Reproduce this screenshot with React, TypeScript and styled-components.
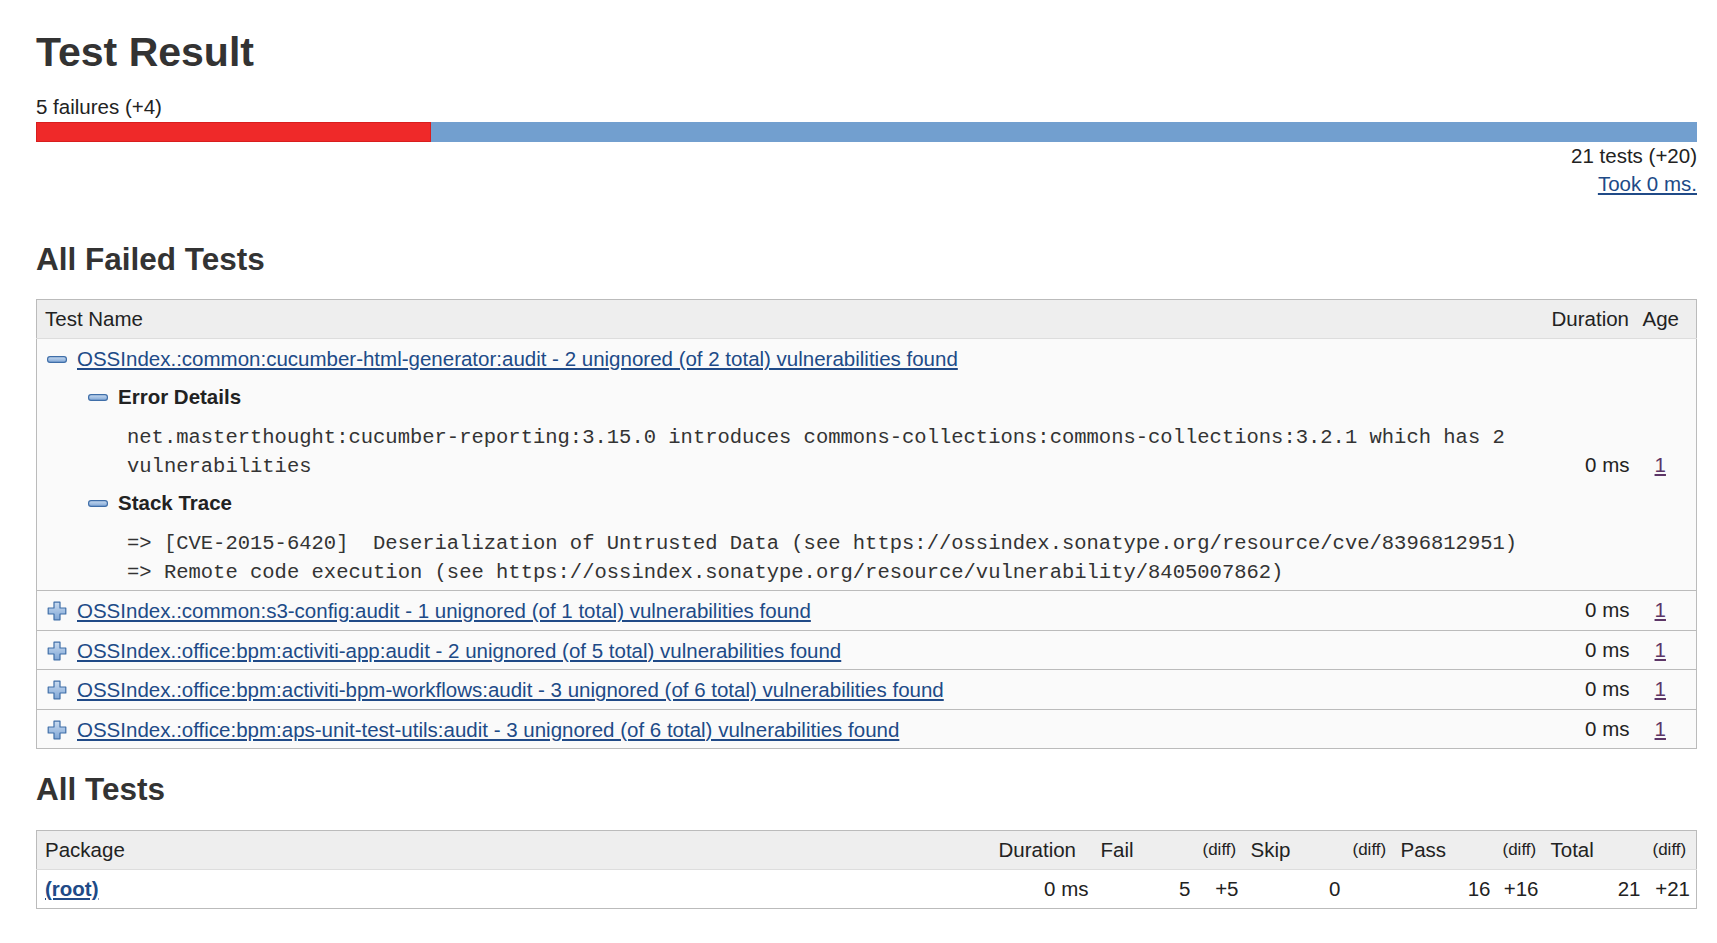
import React from "react";
import styled, { createGlobalStyle } from "styled-components";

const GlobalStyle = createGlobalStyle`
  html, body { margin: 0; padding: 0; background: #fff; }
  body {
    font-family: "Liberation Sans", Arial, Helvetica, sans-serif;
    font-size: 20.5px;
    color: #333;
  }
`;

const Page = styled.main`
  padding: 28px 20px 40px 36px;
`;

const Title = styled.h1`
  margin: 0;
  font-size: 41px;
  line-height: 48px;
  font-weight: bold;
  color: #333;
`;

const Summary = styled.div`
  margin-top: 19px;
  line-height: 24px;
  color: #222;
`;

const Bar = styled.div`
  display: flex;
  height: 20px;
  margin-top: 3px;
  background: #729fcf;
`;

const BarFail = styled.div`
  height: 100%;
  box-sizing: border-box;
  background: #ef2929;
  border: 1px solid #d81e1e;
`;

const RightLine = styled.div<{ $gap: number }>`
  text-align: right;
  line-height: 24px;
  margin-top: ${(p) => p.$gap}px;
  color: #222;
`;

const Link = styled.a<{ $bold?: boolean; $visited?: boolean }>`
  color: ${(p) => (p.$visited ? "#5c3566" : "#204a87")};
  text-decoration: underline;
  font-weight: ${(p) => (p.$bold ? "bold" : "normal")};
`;

const SectionTitle = styled.h2<{ $top: number; $bottom: number }>`
  margin: ${(p) => p.$top}px 0 ${(p) => p.$bottom}px;
  font-size: 31.5px;
  line-height: 36px;
  font-weight: bold;
  color: #333;
`;

const Pane = styled.table`
  width: 100%;
  table-layout: fixed;
  border-collapse: collapse;
  border: 1px solid #bbb;
`;

const Col = styled.col<{ $w?: number }>`
  width: ${(p) => (p.$w ? `${p.$w}px` : "auto")};
`;

const HeadCell = styled.th<{ $first?: boolean; $small?: boolean; $left?: number }>`
  background: #eee;
  font-weight: normal;
  text-align: left;
  white-space: nowrap;
  color: #222;
  height: 39px;
  box-sizing: border-box;
  padding: 0 6px 0 ${(p) => p.$left ?? (p.$first ? 8 : 6)}px;
  font-size: ${(p) => (p.$small ? "17px" : "20.5px")};
  line-height: 24px;
  border-bottom: 1px solid #ddd;
`;

const Row = styled.tr<{ $shade?: boolean }>`
  background: ${(p) => (p.$shade ? "#fafafa" : "#fff")};
  border-top: 1px solid #bbb;
`;

const NameCell = styled.td<{ $bottom: number }>`
  vertical-align: top;
  padding: 8px 6px ${(p) => p.$bottom}px 10px;
  line-height: 24px;
`;

const NumCell = styled.td`
  text-align: right;
  vertical-align: middle;
  white-space: nowrap;
  padding: 0 6px;
  line-height: 24px;
  color: #222;
`;

const AgeCell = styled.td`
  text-align: center;
  vertical-align: middle;
  padding: 0 18px 0 7px;
  line-height: 24px;
`;

const PackageCell = styled.td`
  padding: 7px 6px 7px 8px;
  line-height: 24px;
`;

const Toggle = styled.div`
  display: flex;
  align-items: center;
  gap: 10px;
`;

const DetailBlock = styled.div`
  margin-left: 41px;
`;

const DetailHeading = styled.h3<{ $top: number }>`
  margin: ${(p) => p.$top}px 0 0;
  display: flex;
  align-items: center;
  gap: 10px;
  font-size: 20.5px;
  line-height: 24px;
  font-weight: bold;
  color: #222;
`;

const Trace = styled.pre<{ $wrap?: boolean; $top: number }>`
  margin: ${(p) => p.$top}px 0 0 39px;
  font-family: "Liberation Mono", "Courier New", monospace;
  font-size: 20.5px;
  line-height: 28.5px;
  color: #333;
  white-space: ${(p) => (p.$wrap ? "pre-wrap" : "pre")};
`;

const IconBox = styled.span`
  display: inline-flex;
  flex: none;
`;

const MinusIcon = () => (
  <IconBox>
    <svg width="20" height="7" viewBox="0 0 20 7">
      <defs>
        <linearGradient id="minusFill" x1="0" y1="0" x2="0" y2="1">
          <stop offset="0" stopColor="#c9dbf0" />
          <stop offset="1" stopColor="#7fa6d6" />
        </linearGradient>
      </defs>
      <rect x="0.6" y="0.6" width="18.8" height="5.8" rx="2.4" fill="url(#minusFill)" stroke="#3f6ea8" strokeWidth="1.2" />
    </svg>
  </IconBox>
);

const PlusIcon = () => (
  <IconBox>
    <svg width="20" height="20" viewBox="0 0 20 20">
      <defs>
        <linearGradient id="plusFill" x1="0" y1="0" x2="0" y2="1">
          <stop offset="0" stopColor="#c9dbf0" />
          <stop offset="1" stopColor="#7fa6d6" />
        </linearGradient>
      </defs>
      <path
        d="M7 1.2 H13 V7 H18.8 V13 H13 V18.8 H7 V13 H1.2 V7 H7 Z"
        fill="url(#plusFill)"
        stroke="#3f6ea8"
        strokeWidth="1.2"
        strokeLinejoin="round"
      />
    </svg>
  </IconBox>
);

const collapsed = [
  "OSSIndex.:common:s3-config:audit - 1 unignored (of 1 total) vulnerabilities found",
  "OSSIndex.:office:bpm:activiti-app:audit - 2 unignored (of 5 total) vulnerabilities found",
  "OSSIndex.:office:bpm:activiti-bpm-workflows:audit - 3 unignored (of 6 total) vulnerabilities found",
  "OSSIndex.:office:bpm:aps-unit-test-utils:audit - 3 unignored (of 6 total) vulnerabilities found",
];

const errorText =
  "net.masterthought:cucumber-reporting:3.15.0 introduces commons-collections:commons-collections:3.2.1 which has 2 vulnerabilities";

const stackText =
  "=> [CVE-2015-6420]  Deserialization of Untrusted Data (see https://ossindex.sonatype.org/resource/cve/8396812951)\n=> Remote code execution (see https://ossindex.sonatype.org/resource/vulnerability/8405007862)";

const allCols = [102, 102, 48, 102, 48, 102, 48, 102, 50];
const allHeads: { label: string; small?: boolean }[] = [
  { label: "Duration" },
  { label: "Fail" },
  { label: "(diff)", small: true },
  { label: "Skip" },
  { label: "(diff)", small: true },
  { label: "Pass" },
  { label: "(diff)", small: true },
  { label: "Total" },
  { label: "(diff)", small: true },
];
const allValues = ["0 ms", "5", "+5", "0", "", "16", "+16", "21", "+21"];

export default function App() {
  const failShare = (5 / 21) * 100;
  return (
    <>
      <GlobalStyle />
      <Page>
        <Title>Test Result</Title>
        <Summary>5 failures (+4)</Summary>
        <Bar>
          <BarFail style={{ width: `${failShare}%` }} />
        </Bar>
        <RightLine $gap={2}>21 tests (+20)</RightLine>
        <RightLine $gap={4}>
          <Link href="#">Took 0 ms.</Link>
        </RightLine>

        <SectionTitle $top={45} $bottom={22}>All Failed Tests</SectionTitle>
        <Pane>
          <colgroup>
            <Col />
            <Col $w={90} />
            <Col $w={61} />
          </colgroup>
          <thead>
            <tr>
              <HeadCell $first>Test Name</HeadCell>
              <HeadCell>Duration</HeadCell>
              <HeadCell $left={7}>Age</HeadCell>
            </tr>
          </thead>
          <tbody>
            <Row $shade>
              <NameCell $bottom={3}>
                <Toggle>
                  <MinusIcon />
                  <Link href="#">
                    OSSIndex.:common:cucumber-html-generator:audit - 2 unignored (of 2 total) vulnerabilities found
                  </Link>
                </Toggle>
                <DetailBlock>
                  <DetailHeading $top={14}>
                    <MinusIcon />
                    Error Details
                  </DetailHeading>
                  <Trace $wrap $top={15}>{errorText}</Trace>
                  <DetailHeading $top={10}>
                    <MinusIcon />
                    Stack Trace
                  </DetailHeading>
                  <Trace $top={15}>{stackText}</Trace>
                </DetailBlock>
              </NameCell>
              <NumCell>0 ms</NumCell>
              <AgeCell>
                <Link href="#" $visited>1</Link>
              </AgeCell>
            </Row>
            {collapsed.map((name) => (
              <Row $shade key={name}>
                <NameCell $bottom={6.5}>
                  <Toggle>
                    <PlusIcon />
                    <Link href="#">{name}</Link>
                  </Toggle>
                </NameCell>
                <NumCell>0 ms</NumCell>
                <AgeCell>
                  <Link href="#" $visited>1</Link>
                </AgeCell>
              </Row>
            ))}
          </tbody>
        </Pane>

        <SectionTitle $top={22} $bottom={23}>All Tests</SectionTitle>
        <Pane>
          <colgroup>
            <Col />
            {allCols.map((w, i) => (
              <Col key={i} $w={w} />
            ))}
          </colgroup>
          <thead>
            <tr>
              <HeadCell $first>Package</HeadCell>
              {allHeads.map((h, i) => (
                <HeadCell key={i} $small={h.small}>
                  {h.label}
                </HeadCell>
              ))}
            </tr>
          </thead>
          <tbody>
            <Row>
              <PackageCell>
                <Link href="#" $bold>(root)</Link>
              </PackageCell>
              {allValues.map((v, i) => (
                <NumCell key={i}>{v}</NumCell>
              ))}
            </Row>
          </tbody>
        </Pane>
      </Page>
    </>
  );
}
